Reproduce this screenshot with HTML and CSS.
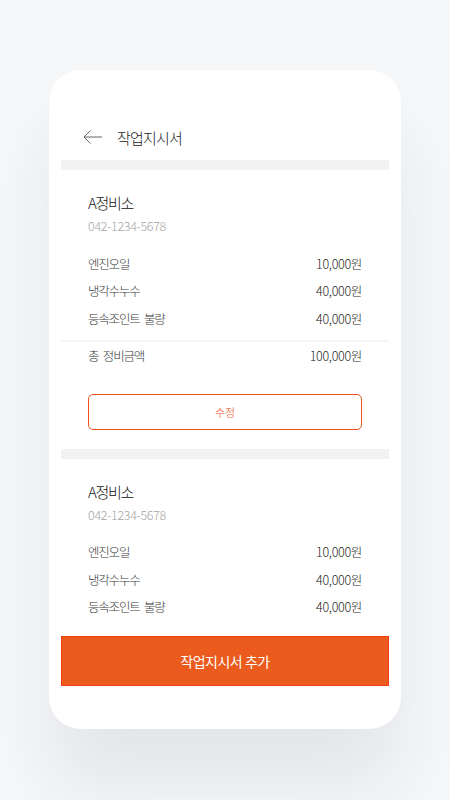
FILE: index.html
```html
<!DOCTYPE html>
<html>
<head>
  <meta charset="UTF-8">
  <title>작업지시서</title>
  <link rel="stylesheet" href="styles.css">
</head>
<body>
  <div class="phone">
    <div class="screen">
      <header class="top">
        <svg class="back" width="20" height="14" viewBox="0 0 20 14">
          <path d="M1 7 H19 M7.5 0.5 L1 7 L7.5 13.5" fill="none" stroke="#666" stroke-width="1"/>
        </svg>
        <span class="title">작업지시서</span>
      </header>

      <div class="bar"></div>
      <section class="order">
        <div class="shop">A정비소</div>
        <div class="phone-no">042-1234-5678</div>
        <div class="items">
          <div class="row"><span>엔진오일</span><span class="price">10,000원</span></div>
          <div class="row"><span>냉각수누수</span><span class="price">40,000원</span></div>
          <div class="row"><span>등속조인트 불량</span><span class="price">40,000원</span></div>
        </div>
      </section>
      <div class="line"></div>
      <section class="order total-box">
        <div class="row"><span>총 정비금액</span><span class="price">100,000원</span></div>
        <button class="edit">수정</button>
      </section>

      <div class="bar"></div>
      <section class="order">
        <div class="shop">A정비소</div>
        <div class="phone-no">042-1234-5678</div>
        <div class="items">
          <div class="row"><span>엔진오일</span><span class="price">10,000원</span></div>
          <div class="row"><span>냉각수누수</span><span class="price">40,000원</span></div>
          <div class="row"><span>등속조인트 불량</span><span class="price">40,000원</span></div>
        </div>
      </section>
    </div>
    <button class="add">작업지시서 추가</button>
  </div>
</body>
</html>
```

FILE: styles.css
```css
body {
  margin: 0;
  height: 800px;
  overflow: hidden;
  background: #f6f7f9;
  font-family: "Noto Sans CJK KR", "Noto Sans", sans-serif;
  font-weight: 300;
  color: #222;
}
.phone {
  width: 352px;
  height: 659px;
  margin: 70px auto 0;
  padding: 44px 12px 0;
  box-sizing: border-box;
  background: #fff;
  border-radius: 32px;
  box-shadow: 0 60px 70px rgba(30, 40, 60, 0.08);
}
.screen {
  height: 522px;
  overflow: hidden;
}
.top {
  height: 46px;
  display: flex;
  align-items: center;
  padding-left: 22px;
}
.back { margin-right: 14px; }
.title {
  font-size: 15px;
  letter-spacing: -0.8px;
  color: #222;
}
.bar {
  height: 10px;
  background: #f2f2f2;
}
.order { padding: 22px 27px 8px; }
.shop {
  font-size: 15px;
  line-height: 22px;
  letter-spacing: -1.3px;
  color: #111;
}
.phone-no {
  margin-top: 2px;
  font-size: 12.5px;
  line-height: 20px;
  letter-spacing: -0.3px;
  color: #a3a3a3;
}
.items { margin-top: 13.5px; }
.row {
  display: flex;
  justify-content: space-between;
  height: 27.5px;
  line-height: 27.5px;
  font-size: 12.5px;
  letter-spacing: -1.2px;
  word-spacing: 3px;
  color: #3a3a3a;
}
.row .price {
  color: #1e1e1e;
  letter-spacing: -0.3px;
}
.line {
  height: 2px;
  background: #f6f6f6;
}
.total-box { padding: 0 27px 18.5px; }
.edit {
  display: block;
  width: 100%;
  height: 36px;
  margin-top: 24.5px;
  border: 1px solid #f0531e;
  border-radius: 5px;
  background: #fff;
  color: #f0531e;
  font-family: inherit;
  font-weight: 300;
  font-size: 11px;
}
.add {
  display: block;
  width: 100%;
  height: 50px;
  border: 1px solid #f13d12;
  background: #ea5b1d;
  color: #fff;
  font-family: inherit;
  font-weight: 400;
  font-size: 14px;
  letter-spacing: -0.5px;
}
```
